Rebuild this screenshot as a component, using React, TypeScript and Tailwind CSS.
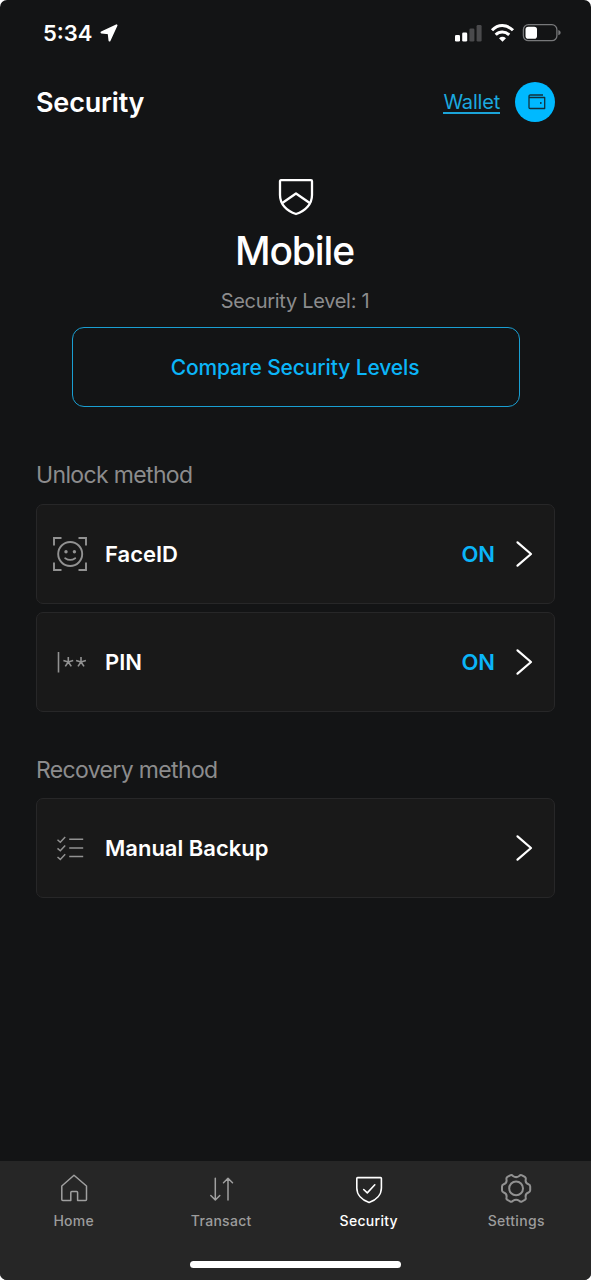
import type { ReactNode } from "react";

function LocationArrow() {
  return (
    <svg className="ml-[7px] h-[18px] w-[18px]" viewBox="0 0 18 18">
      <path d="M16.500 1.300 1.500 8.400 8.700 9.300 9.500 16.500Z" fill="white" stroke="white" strokeWidth="2" strokeLinejoin="round" />
    </svg>
  );
}

function StatusIcons() {
  return (
    <svg className="mt-px h-[20px] w-[108px]" viewBox="0 0 108 20">
      <rect x="0" y="12" width="5" height="6.500" rx="1.300" fill="white" />
      <rect x="7.200" y="9.500" width="5" height="9" rx="1.300" fill="white" />
      <rect x="14.400" y="5.500" width="5" height="13" rx="1.300" fill="#4a4a4c" />
      <rect x="21.600" y="2" width="5" height="16.500" rx="1.300" fill="#4a4a4c" />
      <g fill="none" stroke="white" strokeWidth="3">
        <path d="M37 7.300C43 1 51.600 1 58 7.300" />
        <path d="M40.700 11.800C44.500 8 50 8 54.200 11.800" />
      </g>
      <path d="M44 15.200Q47.500 12.300 51 15.200L47.500 18.800Z" fill="white" />
      <rect x="68.400" y="1.700" width="33.500" height="16" rx="5" fill="none" stroke="#77787a" strokeWidth="1.300" />
      <rect x="70.500" y="3.700" width="11.500" height="12" rx="2.800" fill="white" />
      <path d="M103.300 7.100Q105.700 7.900 105.700 9.700T103.300 12.300Z" fill="#77787a" />
    </svg>
  );
}

function WalletIcon() {
  return (
    <svg className="h-4 w-[18px]" viewBox="0 0 18 16" fill="none" stroke="#12303c" strokeWidth="1.300" strokeLinejoin="round">
      <path d="M15 1H2.500Q1 1 1 2.300 1 3.500 2.300 3.500H16.700V14.500H2.200Q1 14.500 1 13.300V2.300" />
      <circle cx="12.800" cy="9" r="0.900" fill="#12303c" stroke="none" />
    </svg>
  );
}

function LevelShield() {
  return (
    <svg className="h-[38px] w-[36px]" viewBox="0 0 36 38" fill="none" stroke="white" strokeWidth="2.300" strokeLinejoin="round" strokeLinecap="round">
      <path d="M3 2.200H33Q34 2.200 34 3.200V17C34 26 27.500 33.200 18 36C8.500 33.200 2 26 2 17V3.200Q2 2.200 3 2.200Z" />
      <path d="M5 24.500 18 15.500 31 24.500" />
    </svg>
  );
}

function FaceIcon() {
  return (
    <svg className="h-[36px] w-[36px]" viewBox="0 0 36 36" fill="none" stroke="#929292" strokeWidth="1.900">
      <path d="M2 9.500V2H9.500M26.500 2H34V9.500M34 26.500V34H26.500M9.500 34H2V26.500" />
      <circle cx="18.200" cy="18" r="12" />
      <path d="M13.200 22.200Q18.200 25.600 23.200 22.200" strokeLinecap="round" />
      <circle cx="14" cy="15.700" r="1.700" fill="#929292" stroke="none" />
      <circle cx="22.400" cy="15.700" r="1.700" fill="#929292" stroke="none" />
    </svg>
  );
}

function PinIcon() {
  return (
    <svg className="h-[36px] w-[36px]" viewBox="0 0 36 36" fill="none" stroke="#929292" strokeWidth="1.600">
      <path d="M6.500 8V28.500" />
      <path d="M16.300 18V13M16.300 18 11.400 16.400M16.300 18 21.200 16.400M16.300 18 13.300 22.400M16.300 18 19.300 22.400" />
      <path d="M29 18V13M29 18 24.100 16.400M29 18 33.900 16.400M29 18 26 22.400M29 18 32 22.400" />
    </svg>
  );
}

function ChecklistIcon() {
  return (
    <svg className="h-[36px] w-[36px]" viewBox="0 0 36 36" fill="none" stroke="#929292" strokeWidth="1.500">
      <path d="M5.500 9.800 8.300 12.200 13.200 7M5.500 18.400 8.300 20.800 13.200 15.600M5.500 27 8.300 29.400 13.200 24.200" />
      <path d="M17.200 9.300H31.200M17.200 18H31.200M17.200 26.500H31.200" />
    </svg>
  );
}

function Chevron() {
  return (
    <svg className="h-7 w-[18px]" viewBox="0 0 18 28" fill="none" stroke="white" strokeWidth="2.200" strokeLinecap="round" strokeLinejoin="round">
      <path d="M2.500 2.300 16 14 2.500 25.700" />
    </svg>
  );
}

function HomeIcon() {
  return (
    <svg className="h-8 w-8" viewBox="0 0 32 32" fill="none" stroke="#a0a0a0" strokeWidth="1.500" strokeLinejoin="round">
      <path d="M3.800 14 16 3.300 28.500 14V27.500Q28.500 28.500 27.500 28.500H19.600V20.500Q19.600 19.500 18.600 19.500H13.800Q12.800 19.500 12.800 20.500V28.500H4.800Q3.800 28.500 3.800 27.500Z" />
    </svg>
  );
}

function TransactIcon() {
  return (
    <svg className="h-8 w-8" viewBox="0 0 32 32" fill="none" stroke="#a0a0a0" strokeWidth="1.500" strokeLinecap="round" strokeLinejoin="round">
      <path d="M10.300 6.300V27.500M5.800 23.500 10.300 28 14.800 23.500M23 28V6.300M18.500 10.800 23 6.300 27.500 10.800" />
    </svg>
  );
}

function SecurityIcon() {
  return (
    <svg className="h-8 w-8" viewBox="0 0 32 32" fill="none" stroke="white" strokeWidth="1.600" strokeLinecap="round" strokeLinejoin="round">
      <path d="M4.600 5.600H27.600Q28.400 5.600 28.400 6.400V16C28.400 22.500 23.500 28 16.100 30.500C8.700 28 3.800 22.500 3.800 16V6.400Q3.800 5.600 4.600 5.600Z" />
      <path d="M10.700 17.500 14.300 20.900 21.800 12.800" />
    </svg>
  );
}

function SettingsIcon() {
  return (
    <svg className="h-8 w-8" viewBox="0 0 32 32" fill="none" stroke="#929292" strokeWidth="2" strokeLinejoin="round">
      <path d="M13 4C14.800 5.300 17.400 5.300 19.200 4Q20.500 2.600 22 3.300L24.800 4.900Q26.200 5.800 25.700 7.600C25.300 9.800 26.400 11.600 28.500 12.300Q30.200 12.900 30.200 14.600V18.200Q30.200 19.900 28.500 20.500C26.400 21.200 25.300 23 25.700 25.200Q26.200 27 24.800 27.900L22 29.500Q20.500 30.200 19.200 28.800C17.400 27.500 14.800 27.500 13 28.800Q11.700 30.200 10.200 29.500L7.400 27.900Q6 27 6.500 25.200C6.900 23 5.800 21.200 3.700 20.500Q2 19.900 2 18.200V14.600Q2 12.900 3.700 12.300C5.800 11.600 6.900 9.800 6.500 7.600Q6 5.800 7.400 4.900L10.200 3.300Q11.700 2.600 13 4Z" />
      <circle cx="16.100" cy="16.400" r="6.900" />
    </svg>
  );
}

function Row({ icon, label, status }: { icon: ReactNode; label: string; status?: string }) {
  return (
    <button className="flex h-[100px] w-full items-center rounded-[7px] border border-[#272728] bg-[#191919] pr-[21px] pl-[15px] text-left">
      {icon}
      <span className="ml-[17px] text-[22px] leading-7 font-semibold text-white">{label}</span>
      <span className="mr-[20px] ml-auto text-[22px] leading-7 font-semibold text-[#0bb5f8]">{status}</span>
      <Chevron />
    </button>
  );
}

function Tab({ icon, label, active = false }: { icon: ReactNode; label: string; active?: boolean }) {
  return (
    <a className={`flex w-[147.500px] flex-col items-center text-[14px] leading-5 font-medium tracking-[0.300px] ${active ? "text-white" : "text-[#9c9c9c]"}`}>
      {icon}
      <span className="mt-[7px]">{label}</span>
    </a>
  );
}

export default function App() {
  return (
    <div className="h-[1280px] w-[591px] bg-white font-['Inter',sans-serif]">
      <div className="flex h-full flex-col overflow-hidden rounded-[7px] bg-[#131415]">
        <div className="flex h-[64px] items-center justify-between pr-[28px] pl-[43px]">
          <div className="flex items-center pt-px text-[22px] leading-7 font-semibold text-white">
            <span>5:34</span>
            <LocationArrow />
          </div>
          <StatusIcons />
        </div>

        <header className="flex h-[76px] items-center justify-between pr-[36px] pl-[36px]">
          <h1 className="pt-[2px] text-[27px] leading-8 font-semibold tracking-[-0.200px] text-white">Security</h1>
          <div className="flex items-center">
            <a className="mt-px border-b-2 border-[#1ba4d8] pt-px text-[20px] leading-[20px] tracking-[-0.200px] text-[#1ba9df]">Wallet</a>
            <span className="ml-[15px] flex h-10 w-10 items-center justify-center rounded-full bg-[#00b9ff] pl-[3px]">
              <WalletIcon />
            </span>
          </div>
        </header>

        <main className="flex flex-1 flex-col px-[36px]">
          <section className="flex flex-col items-center pt-[38px]">
            <LevelShield />
            <h2 className="mt-[11px] mr-[2px] text-[39px] leading-[48px] font-medium tracking-[-1.100px] text-white">Mobile</h2>
            <p className="mt-[14px] mr-px text-[20px] leading-6 tracking-[-0.300px] text-[#8c8c8d]">Security Level: 1</p>
            <button className="mt-[14px] h-[80px] w-[448px] rounded-[12px] border-[1.500px] border-[#1a9fd2] pt-[2px] pr-px text-[21px] font-medium tracking-[-0.120px] text-[#0bb5f8]">
              Compare Security Levels
            </button>
          </section>

          <h3 className="mt-[54px] text-[23px] leading-7 tracking-[-0.650px] text-[#8c8c8d]">Unlock method</h3>
          <div className="mt-[14.500px] flex flex-col gap-[8.500px]">
            <Row icon={<FaceIcon />} label="FaceID" status="ON" />
            <Row icon={<PinIcon />} label="PIN" status="ON" />
          </div>

          <h3 className="mt-[44px] text-[23px] leading-7 tracking-[-0.650px] text-[#8c8c8d]">Recovery method</h3>
          <div className="mt-[14px]">
            <Row icon={<ChecklistIcon />} label="Manual Backup" />
          </div>
        </main>

        <footer className="flex h-[119px] flex-col items-center bg-[#262626]">
          <nav className="flex w-full pt-[11px]">
            <Tab icon={<HomeIcon />} label="Home" />
            <Tab icon={<TransactIcon />} label="Transact" />
            <Tab icon={<SecurityIcon />} label="Security" active />
            <Tab icon={<SettingsIcon />} label="Settings" />
          </nav>
          <div className="mt-[30px] h-[7px] w-[211px] rounded-full bg-white" />
        </footer>
      </div>
    </div>
  );
}
